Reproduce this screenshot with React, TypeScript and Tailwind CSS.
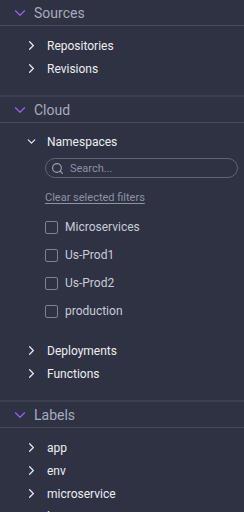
import { ChevronDown, ChevronRight, Search } from "lucide-react";

const font = { fontFamily: "Roboto, 'Noto Sans', sans-serif" };

function SectionHeader({ title }: { title: string }) {
  return (
    <div className="flex h-[26px] items-center gap-[5px] border-b border-[#464b5c] pl-[11px]">
      <ChevronDown size={18} strokeWidth={1.7} className="text-[#8f63ee]" aria-hidden />
      <span className="text-[14px] leading-none text-[#a7abbe]">{title}</span>
    </div>
  );
}

function Item({ label, open = false }: { label: string; open?: boolean }) {
  return (
    <div className="flex h-[23px] items-center gap-[8px] pl-[24px]">
      <span className="grid h-[15px] w-[15px] place-items-center text-[#e6e8f0]">
        {open ? (
          <ChevronDown size={13} strokeWidth={2.2} aria-hidden />
        ) : (
          <ChevronRight size={15} strokeWidth={2} aria-hidden />
        )}
      </span>
      <span className="text-[12px] leading-none text-[#eceef4]">{label}</span>
    </div>
  );
}

function Check({ label }: { label: string }) {
  return (
    <div className="flex h-[28px] items-center gap-[7px] pl-[45px]">
      <span className="h-[13px] w-[13px] rounded-[2px] border border-[#7d8294]" />
      <span className="text-[12px] leading-none text-[#c9ccd8]">{label}</span>
    </div>
  );
}

export default function App() {
  return (
    <div className="h-[512px] w-[244px] overflow-hidden bg-[#2e3242]" style={font}>
      <section className="border-b-2 border-[#3b4051]">
        <SectionHeader title="Sources" />
        <div className="pt-[8px] pb-[15px]">
          <Item label="Repositories" />
          <Item label="Revisions" />
        </div>
      </section>

      <section className="border-b-2 border-[#3b4051]">
        <SectionHeader title="Cloud" />
        <div className="pt-[7px] pb-[15px]">
          <Item label="Namespaces" open />
          <div className="pl-[45px] pr-[6px] pt-[5px]">
            <div className="flex h-[20px] items-center gap-[6px] rounded-full border border-[#5f6475] pl-[5px]">
              <Search size={13} strokeWidth={2.2} className="text-[#9a9eb0]" aria-hidden />
              <span className="text-[11px] leading-none text-[#8d91a3]">Search...</span>
            </div>
          </div>
          <div className="pl-[45px] pt-[12px] pb-[7px] text-[11px] leading-[16px]">
            <span className="text-[#8f93a5] underline underline-offset-2">Clear selected filters</span>
          </div>
          <Check label="Microservices" />
          <Check label="Us-Prod1" />
          <Check label="Us-Prod2" />
          <Check label="production" />
          <div className="h-[14px]" />
          <Item label="Deployments" />
          <Item label="Functions" />
        </div>
      </section>

      <section>
        <SectionHeader title="Labels" />
        <div className="pt-[8px]">
          <Item label="app" />
          <Item label="env" />
          <Item label="microservice" />
          <Item label="l" />
        </div>
      </section>
    </div>
  );
}
